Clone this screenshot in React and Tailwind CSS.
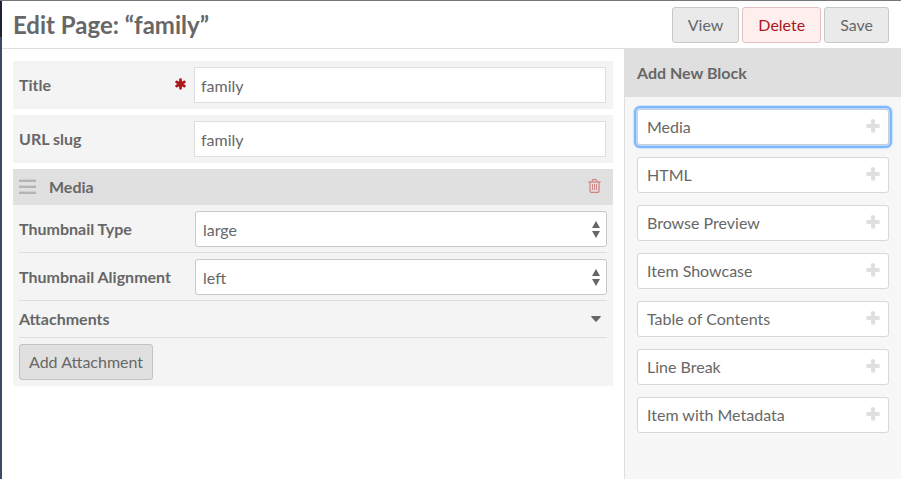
const BLOCKS = [
  "Media",
  "HTML",
  "Browse Preview",
  "Item Showcase",
  "Table of Contents",
  "Line Break",
  "Item with Metadata",
];

function RequiredIcon() {
  return (
    <svg viewBox="0 0 11 12" className="mb-0.5 h-3 w-[11px]" fill="none" stroke="#a91919" strokeWidth="2.8" strokeLinecap="round" aria-hidden="true">
      <path d="M5.5 1.7v8.6M1.7 3.9l7.6 4.2M9.3 3.9L1.7 8.1" />
    </svg>
  );
}

function PlusIcon() {
  return (
    <svg viewBox="0 0 14 14" className="mb-0.5 size-3.5 shrink-0 fill-[#dfdfdf]" aria-hidden="true">
      <rect x="0.3" y="5" width="13.4" height="4" rx="1" />
      <rect x="5" y="0.3" width="4" height="13.2" rx="1" />
    </svg>
  );
}

function TrashIcon() {
  return (
    <svg viewBox="0 0 13 14" className="h-3.5 w-[13px]" fill="none" stroke="#cf8080" aria-hidden="true">
      <path d="M0.3 3h12.4" strokeWidth="1.2" />
      <path d="M3.8 2.6L4.4 1.1Q4.6 0.6 5.1 0.6h2.8q0.5 0 0.7 0.5l0.6 1.5" strokeWidth="1.1" />
      <path d="M2 3v9q0 1.4 1.2 1.4h6.6q1.2 0 1.2-1.4V3" strokeWidth="1.2" />
      <path d="M4.5 5v6M6.5 5v6M8.5 5v6" strokeWidth="0.9" />
    </svg>
  );
}

function GripIcon() {
  return (
    <svg viewBox="0 0 17 16" className="h-4 w-[17px]" aria-hidden="true">
      <path d="M0 0h17v1H0zM0 6h17v1H0zM0 12h17v1H0z" fill="#cfcfcf" />
      <path d="M0 1h17v2H0zM0 7h17v2H0zM0 13h17v2H0z" fill="#b4b4b4" />
    </svg>
  );
}

function TextRow({ id, label, required }) {
  return (
    <div className="flex items-center bg-[#f4f4f4] p-1.5 pr-[7px]">
      <label htmlFor={id} className="flex w-[175px] shrink-0 items-center justify-between pr-2 font-bold">
        {label}
        {required && <RequiredIcon />}
      </label>
      <input
        id={id}
        type="text"
        defaultValue="family"
        className="h-9 min-w-0 flex-1 border border-[#dfdfdf] bg-white px-1.5 pt-px outline-none"
      />
    </div>
  );
}

function SelectRow({ id, label, value, options }) {
  return (
    <div className="flex items-center border-b border-[#dfdfdf] pt-1.5 pb-[5px]">
      <label htmlFor={id} className="w-44 shrink-0 font-bold">
        {label}
      </label>
      <div className="relative flex-1">
        <select
          id={id}
          defaultValue={value}
          className="block h-9 w-full appearance-none rounded-[3px] border border-[#c8c8c8] bg-white px-[7px] pt-0.5 outline-none"
        >
          {options.map((option) => (
            <option key={option}>{option}</option>
          ))}
        </select>
        <svg
          viewBox="0 0 8 18"
          className="pointer-events-none absolute top-2.5 right-[7px] h-[18px] w-2 fill-[#676767]"
          aria-hidden="true"
        >
          <path d="M4 0L8 7H0zM4 17L8 10H0z" />
        </svg>
      </div>
    </div>
  );
}

export default function App() {
  return (
    <div className="flex min-h-screen border-t border-[#777777] bg-white font-['Lato',sans-serif] text-base text-[#676767]">
      <div className="flex w-0.5 shrink-0 flex-col bg-[#3c4a66]">
        <div className="h-9 bg-[#1d2430]" />
      </div>
      <div className="flex min-w-0 flex-1 flex-col">
        <header className="flex h-[47px] items-center justify-between pr-3 pl-[11px]">
          <h1 className="text-2xl font-bold">Edit Page: “family”</h1>
          <div className="flex gap-[3px]">
            <button className="h-9 rounded-[3px] border border-[#c8c8c8] bg-[#eaeaea] px-[15px]">View</button>
            <button className="h-9 rounded-[3px] border border-[#e5c0c0] bg-[#ffeeee] px-[15px] text-[#a91919]">
              Delete
            </button>
            <button className="h-9 rounded-[3px] border border-[#c8c8c8] bg-[#eaeaea] px-[15px]">Save</button>
          </div>
        </header>

        <div className="flex flex-1">
          <main className="min-w-0 flex-1 border-t border-[#dfdfdf] py-3 pr-[11px] pl-[11px]">
            <form className="flex flex-col gap-1.5">
              <TextRow id="title" label="Title" required />
              <TextRow id="slug" label="URL slug" />
              <section className="bg-[#f4f4f4]">
                <div className="flex h-9 items-center bg-[#e0e0e0] pr-3 pl-1.5">
                  <GripIcon />
                  <h2 className="ml-[13px] flex-1 font-bold">Media</h2>
                  <button type="button" aria-label="Delete block" className="mb-0.5">
                    <TrashIcon />
                  </button>
                </div>
                <div className="px-1.5 pb-1.5">
                  <SelectRow
                    id="thumbnail-type"
                    label="Thumbnail Type"
                    value="large"
                    options={["large", "medium", "square"]}
                  />
                  <SelectRow
                    id="thumbnail-alignment"
                    label="Thumbnail Alignment"
                    value="left"
                    options={["left", "right", "center"]}
                  />
                  <div className="flex h-[37px] items-center justify-between border-b border-[#dfdfdf] pr-1.5">
                    <h3 className="font-bold">Attachments</h3>
                    <button type="button" aria-label="Collapse attachments">
                      <svg viewBox="0 0 10 6" className="h-1.5 w-2.5 fill-[#676767]" aria-hidden="true">
                        <path d="M0.6 0h8.8q0.8 0.2 0.3 1L5.6 5.5q-0.6 0.6-1.2 0L0.3 1Q-0.2 0.2 0.6 0z" />
                      </svg>
                    </button>
                  </div>
                  <button
                    type="button"
                    className="mt-1.5 block h-9 rounded-[3px] border border-[#c2c2c2] bg-[#e0e0e0] px-[9px]"
                  >
                    Add Attachment
                  </button>
                </div>
              </section>
            </form>
          </main>

          <aside className="w-[277px] shrink-0 border-l border-[#dfdfdf] bg-[#f7f7f7]">
            <h2 className="flex h-[49px] items-center bg-[#dfdfdf] px-3 font-bold">Add New Block</h2>
            <div className="flex flex-col gap-3 p-3">
              {BLOCKS.map((name, index) => (
                <button
                  key={name}
                  className={
                    index === 0
                      ? "flex h-9 items-center justify-between rounded-[3px] border border-[#c6cfdf] bg-white pr-2 pl-[9px] shadow-[0_0_0_1px_#b9d8fb,0_0_0_3px_#7db8fc,0_0_1px_4px_#cfe4fb]"
                      : "flex h-9 items-center justify-between rounded-[3px] border border-[#d8d8d8] bg-white pr-2 pl-[9px]"
                  }
                >
                  {name}
                  <PlusIcon />
                </button>
              ))}
            </div>
          </aside>
        </div>
      </div>
    </div>
  );
}
